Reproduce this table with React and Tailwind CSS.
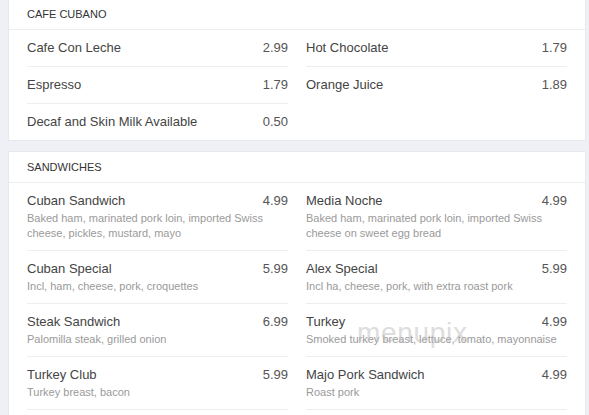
import React from "react";

const sections = [
  {
    title: "CAFE CUBANO",
    items: [
      { name: "Cafe Con Leche", price: "2.99" },
      { name: "Hot Chocolate", price: "1.79" },
      { name: "Espresso", price: "1.79" },
      { name: "Orange Juice", price: "1.89" },
      { name: "Decaf and Skin Milk Available", price: "0.50" },
    ],
  },
  {
    title: "SANDWICHES",
    more: true,
    items: [
      {
        name: "Cuban Sandwich",
        price: "4.99",
        desc: "Baked ham, marinated pork loin, imported Swiss cheese, pickles, mustard, mayo",
      },
      {
        name: "Media Noche",
        price: "4.99",
        desc: "Baked ham, marinated pork loin, imported Swiss cheese on sweet egg bread",
      },
      { name: "Cuban Special", price: "5.99", desc: "Incl, ham, cheese, pork, croquettes" },
      { name: "Alex Special", price: "5.99", desc: "Incl ha, cheese, pork, with extra roast pork" },
      { name: "Steak Sandwich", price: "6.99", desc: "Palomilla steak, grilled onion" },
      { name: "Turkey", price: "4.99", desc: "Smoked turkey breast, lettuce, tomato, mayonnaise" },
      { name: "Turkey Club", price: "5.99", desc: "Turkey breast, bacon" },
      { name: "Majo Pork Sandwich", price: "4.99", desc: "Roast pork" },
    ],
  },
];

function MenuItem({ item, first }) {
  return (
    <div
      className={`pt-2 ${item.desc ? "pb-[9px]" : "pb-2"} ${
        first ? "" : "border-t border-[#eeeeef]"
      }`}
    >
      <div className="flex justify-between text-[13px] leading-5 text-[#444]">
        <span>{item.name}</span>
        <span className="text-[#555]">{item.price}</span>
      </div>
      {item.desc && (
        <div className="text-[11px] leading-[15px] text-[#9a9a9a]">{item.desc}</div>
      )}
    </div>
  );
}

export default function App() {
  return (
    <div
      className="relative h-screen overflow-hidden bg-[#eef0f5] pl-2 pr-[3px] flex flex-col gap-[10px]"
      style={{ fontFamily: '"Liberation Sans", Arial, sans-serif' }}
    >
      {sections.map((sec, s) => (
        <div
          key={sec.title}
          className={`shrink-0 bg-white border border-[#e8e9ee] ${s === 0 ? "-mt-[2px]" : ""}`}
        >
          <div className="h-[31px] flex items-center px-[18px] border-b border-[#eeeeef] text-[11px] text-[#333]">
            {sec.title}
          </div>
          <div className="grid grid-cols-2 gap-x-[18px] px-[18px]">
            {sec.items.map((item, i) => (
              <MenuItem key={item.name} item={item} first={i < 2} />
            ))}
            {/* list continues below the fold */}
            {sec.more && <div className="border-t border-[#eeeeef] h-10" />}
            {sec.more && <div className="border-t border-[#eeeeef] h-10" />}
          </div>
        </div>
      ))}

      {/* watermark */}
      <div className="absolute left-[357px] top-[319px] text-[28px] leading-none tracking-wide text-[#bdbdbd] opacity-50 pointer-events-none select-none">
        menupix
      </div>
    </div>
  );
}
